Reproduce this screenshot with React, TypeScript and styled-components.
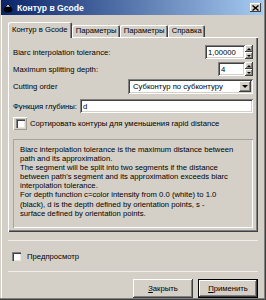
import React from "react";
import styled, { createGlobalStyle, css } from "styled-components";

const GlobalStyle = createGlobalStyle`
  html, body { margin: 0; padding: 0; background: #d4d0c8; }
  body {
    font-family: "Liberation Sans", Arial, sans-serif;
    font-size: 7.7px;
    color: #000;
  }
  * { box-sizing: border-box; }
`;

const raised = css`
  box-shadow: inset -1px -1px #404040, inset 1px 1px #ffffff,
    inset -2px -2px #808080, inset 2px 2px #d4d0c8;
`;

const sunken = css`
  box-shadow: inset 1px 1px #808080, inset -1px -1px #ffffff,
    inset 2px 2px #404040, inset -2px -2px #d4d0c8;
`;

const Window = styled.div`
  width: 266px;
  height: 300px;
  display: flex;
  flex-direction: column;
  padding: 0 3px 4px 2px;
  background: #d4d0c8;
  box-shadow: inset -1px -1px #404040, inset -2px -2px #808080,
    inset 1px 0 #d4d0c8, inset 2px 0 #ffffff;
`;

const TitleBar = styled.div`
  flex: none;
  height: 15px;
  margin-left: -1px;
  display: flex;
  align-items: center;
  gap: 4px;
  padding: 0 2px 0 2px;
  background: linear-gradient(to right, #0a246a, #a6caf0);
  color: #fff;
  font-weight: bold;
  font-size: 8.6px;
`;

const TitleText = styled.span`
  flex: 1;
  white-space: nowrap;
`;

const CloseButton = styled.div`
  width: 11px;
  height: 9px;
  display: flex;
  align-items: center;
  justify-content: center;
  background: #d4d0c8;
  box-shadow: inset -1px -1px #404040, inset 1px 1px #ffffff;
`;

const Body = styled.div`
  flex: 1;
  display: flex;
  flex-direction: column;
  padding: 7px 5px 0 6px;
`;

const Tabs = styled.div`
  flex: none;
  height: 15px;
  display: flex;
  align-items: flex-end;
  position: relative;
  z-index: 1;
`;

const Tab = styled.div<{ $active?: boolean }>`
  height: ${(p) => (p.$active ? "16px" : "12px")};
  margin-bottom: ${(p) => (p.$active ? "-1px" : "0")};
  padding: ${(p) => (p.$active ? "3px 4px 0" : "1px 3px 0 4px")};
  display: flex;
  align-items: flex-start;
  white-space: nowrap;
  background: #d4d0c8;
  border-radius: 2px 2px 0 0;
  box-shadow: inset 1px 1px #ffffff, inset -1px 0 #404040, inset -2px 0 #808080;
`;

const Panel = styled.div`
  flex: none;
  height: 195px;
  display: flex;
  flex-direction: column;
  gap: 3px;
  padding: 8px 5px 4px 5px;
  box-shadow: inset 1px 1px #ffffff, inset -1px -1px #404040,
    inset -2px -2px #808080;
`;

const Row = styled.div<{ $h?: number; $mt?: number }>`
  height: ${(p) => p.$h ?? 14}px;
  margin-top: ${(p) => p.$mt ?? 0}px;
  display: flex;
  align-items: center;
  gap: 3px;
  white-space: nowrap;
`;

const Label = styled.span<{ $grow?: boolean }>`
  flex: ${(p) => (p.$grow ? 1 : "none")};
`;

const Field = styled.div<{ $w?: number }>`
  ${(p) => (p.$w ? `width: ${p.$w}px;` : "flex: 1;")}
  height: 100%;
  display: flex;
  align-items: center;
  padding: 0 3px;
  background: #fff;
  ${sunken}
`;

const Spin = styled.div`
  height: 100%;
  display: flex;
`;

const SpinArrows = styled.div`
  width: 8px;
  display: flex;
  flex-direction: column;
`;

const SmallButton = styled.div`
  flex: 1;
  display: flex;
  align-items: center;
  justify-content: center;
  background: #d4d0c8;
  ${raised}
`;

const Tri = styled.span<{ $up?: boolean; $size?: number }>`
  width: 0;
  height: 0;
  border-left: ${(p) => p.$size ?? 2}px solid transparent;
  border-right: ${(p) => p.$size ?? 2}px solid transparent;
  ${(p) =>
    p.$up
      ? `border-bottom: ${p.$size ?? 2}px solid #000;`
      : `border-top: ${p.$size ?? 2}px solid #000;`}
`;

const Combo = styled.div`
  width: 125px;
  height: 100%;
  display: flex;
  align-items: center;
  padding: 2px;
  background: #fff;
  ${sunken}
`;

const ComboText = styled.span`
  flex: 1;
  padding-left: 3px;
`;

const ComboButton = styled.div`
  width: 12px;
  height: 100%;
  display: flex;
  align-items: center;
  justify-content: center;
  background: #d4d0c8;
  ${raised}
`;

const CheckFrame = styled.div`
  width: 14px;
  height: 13px;
  display: flex;
  align-items: center;
  justify-content: center;
  box-shadow: inset 1px 1px #ffffff, inset -1px -1px #a09c94;
`;

const CheckBox = styled.div`
  width: 9px;
  height: 9px;
  background: #fff;
  box-shadow: inset 1px 1px #808080, inset 2px 2px #404040,
    inset -1px -1px #e8e6e0;
`;

const Description = styled.div`
  flex: 1;
  margin-top: 6px;
  padding: 6px 4px 0 7px;
  line-height: 9.1px;
  white-space: nowrap;
  box-shadow: inset 1px 1px #a8a49c, inset -1px -1px #ffffff;
`;

const Divider = styled.div<{ $mt?: number }>`
  flex: none;
  height: 1px;
  margin-top: ${(p) => p.$mt ?? 0}px;
  background: #efede8;
`;

const PreviewRow = styled.div`
  flex: none;
  height: 14px;
  margin-top: 8px;
  display: flex;
  align-items: center;
  gap: 6px;
  padding-left: 4px;
`;

const ButtonBar = styled.div`
  flex: none;
  display: flex;
  justify-content: flex-end;
  gap: 5px;
  margin-top: 7px;
`;

const PushButton = styled.div<{ $default?: boolean }>`
  width: 60px;
  height: 19px;
  display: flex;
  align-items: center;
  justify-content: center;
  background: #d4d0c8;
  ${(p) =>
    p.$default
      ? css`
          box-shadow: inset 0 0 0 1px #000, inset -2px -2px #404040,
            inset 2px 2px #ffffff, inset -3px -3px #808080;
        `
      : raised}
`;

const U = styled.span`
  text-decoration: underline;
`;

const AppIcon = () => (
  <svg width="10" height="10" viewBox="0 0 10 10">
    <path d="M5 0.5 L9.5 6 Q9.5 9.5 5 9.5 Q0.5 9.5 0.5 6 Z" fill="#000" />
    <path d="M5 1.5 L7 4 L5 3.6 L3 4 Z" fill="#fff" />
  </svg>
);

const CloseIcon = () => (
  <svg width="7" height="6" viewBox="0 0 7 6">
    <path d="M0.5 0.5 L6.5 5.5 M6.5 0.5 L0.5 5.5" stroke="#000" strokeWidth="1.4" />
  </svg>
);

const SpinBox = ({ value, width }: { value: string; width: number }) => (
  <Spin>
    <Field $w={width}>{value}</Field>
    <SpinArrows>
      <SmallButton>
        <Tri $up />
      </SmallButton>
      <SmallButton>
        <Tri />
      </SmallButton>
    </SpinArrows>
  </Spin>
);

const descriptionLines = [
  "Biarc interpolation tolerance is the maximum distance between",
  "path and its approximation.",
  "The segment will be split into two segments if the distance",
  "between path's segment and its approximation exceeds biarc",
  "interpolation tolerance.",
  "For depth function c=color intensity from 0.0 (white) to 1.0",
  "(black), d is the depth defined by orientation points, s -",
  "surface defined by orientation points.",
];

export default function App() {
  return (
    <>
      <GlobalStyle />
      <Window>
        <TitleBar>
          <AppIcon />
          <TitleText>Контур в Gcode</TitleText>
          <CloseButton>
            <CloseIcon />
          </CloseButton>
        </TitleBar>
        <Body>
          <Tabs>
            <Tab $active>Контур в Gcode</Tab>
            <Tab>Параметры</Tab>
            <Tab>Параметры</Tab>
            <Tab>Справка</Tab>
          </Tabs>
          <Panel>
            <Row>
              <Label $grow>Biarc interpolation tolerance:</Label>
              <SpinBox value="1,00000" width={40} />
            </Row>
            <Row>
              <Label $grow>Maximum splitting depth:</Label>
              <SpinBox value="4" width={27} />
            </Row>
            <Row $h={15}>
              <Label $grow>Cutting order</Label>
              <Combo>
                <ComboText>Субконтур по субконтуру</ComboText>
                <ComboButton>
                  <Tri $size={3} />
                </ComboButton>
              </Combo>
            </Row>
            <Row $mt={2}>
              <Label>Функция глубины:</Label>
              <Field>d</Field>
            </Row>
            <Row $h={13} $mt={1}>
              <CheckFrame>
                <CheckBox />
              </CheckFrame>
              <Label>Сортировать контуры для уменьшения rapid distance</Label>
            </Row>
            <Description>
              {descriptionLines.map((l) => (
                <div key={l}>{l}</div>
              ))}
            </Description>
          </Panel>
          <Divider $mt={8} />
          <PreviewRow>
            <CheckBox />
            <span>Предпросмотр</span>
          </PreviewRow>
          <Divider $mt={8} />
          <ButtonBar>
            <PushButton>
              <span>
                <U>З</U>акрыть
              </span>
            </PushButton>
            <PushButton $default>
              <span>
                <U>П</U>рименить
              </span>
            </PushButton>
          </ButtonBar>
        </Body>
      </Window>
    </>
  );
}
